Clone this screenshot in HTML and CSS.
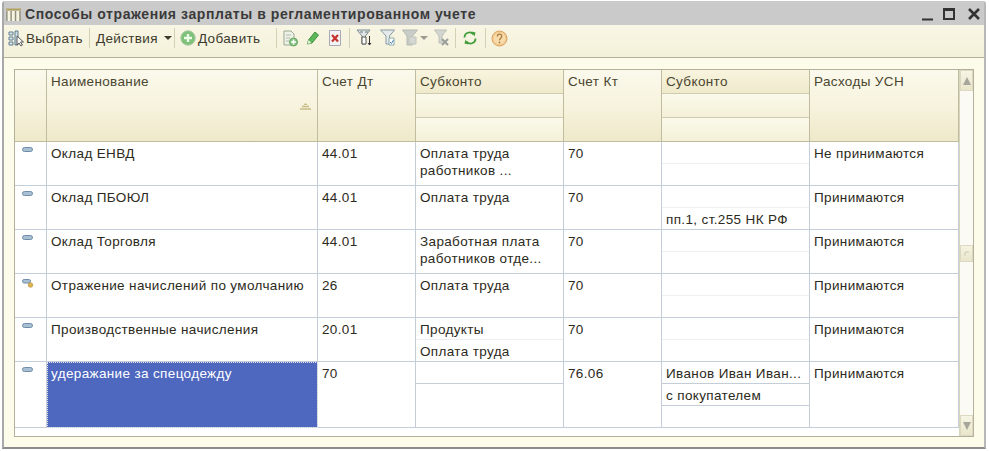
FILE: index.html
```html
<!DOCTYPE html>
<html lang="ru">
<head>
<meta charset="utf-8">
<title>Способы отражения зарплаты</title>
<link rel="stylesheet" href="styles.css">
</head>
<body>
<div class="window">
  <div class="title">
    <svg class="title-icon" width="15" height="13" viewBox="0 0 15 13"><path d="M0 1.500h15" stroke="#b3a25e" stroke-width="2"/><path d="M1 3v10M5 3v10M9.500 3v10M14 3v10" stroke="#8d8d78" stroke-width="1.400"/><path d="M3 3v10M7.300 3v10M11.800 3v10" stroke="#f7f4df" stroke-width="2.600"/></svg>
    <span class="title-text">Способы отражения зарплаты в регламентированном учете</span>
    <div class="win-buttons">
      <svg width="14" height="14" viewBox="0 0 14 14"><path d="M1 12.500h11" stroke="#333" stroke-width="2"/></svg>
      <svg class="wb-max" width="14" height="14" viewBox="0 0 14 14"><path d="M2 2.500h10v9.500H2z" fill="none" stroke="#333" stroke-width="2"/><path d="M1 2.500h12" stroke="#333" stroke-width="3"/></svg>
      <svg class="wb-close" width="14" height="14" viewBox="0 0 14 14"><path d="M2 2l10 10M12 2L2 12" stroke="#333" stroke-width="2.600"/></svg>
    </div>
  </div>
  <div class="toolbar">
    <span class="tb-btn"><svg width="16" height="18" viewBox="0 0 16 18"><path d="M1 3h4v3H1zM1 8h4v3H1zM1 13h4v3H1z" fill="#dfe8ee" stroke="#5f7f90"/><path d="M7 2h3v14H7z" fill="#cfdde6" stroke="#5f7f90"/><path d="M9 7l0 9 2-2 2 3 1.500-1-2-3h3z" fill="#fff" stroke="#555"/></svg>Выбрать</span>
    <i class="sep sep-a"></i>
    <span class="tb-btn">Действия<b class="caret"></b></span>
    <i class="sep sep-b"></i>
    <span class="tb-btn"><svg width="16" height="16" viewBox="0 0 16 16"><circle cx="8" cy="8" r="7.200" fill="#7fc07a" stroke="#a5c9a0"/><path d="M8 4v8M4 8h8" stroke="#eafbe6" stroke-width="2.400"/></svg><span><u>Д</u>обавить</span></span>
    <i class="sep sep-c"></i>
    <svg class="tb-icon ml-0" width="15" height="17" viewBox="0 0 15 17"><path d="M1 1h7l3 3v11H1z" fill="#eef1e8" stroke="#9aa88e"/><path d="M3 5h5M3 8h4M3 11h3" stroke="#b3bda6"/><circle cx="10.500" cy="12" r="4" fill="#84c27e" stroke="#6aa566"/><path d="M10.500 9.500v5M8 12h5" stroke="#fff" stroke-width="1.500"/></svg>
    <svg class="tb-icon ml-9" width="12" height="14" viewBox="0 0 12 14"><path d="M.5 13l1-4 6.500-8 3.500 3-6.500 8z" fill="#5cb85a" stroke="#3f8f3d"/><path d="M.5 13l1-4 3 3z" fill="#e8efd8"/></svg>
    <svg class="tb-icon ml-10" width="12" height="16" viewBox="0 0 12 16"><path d="M.5.500h11v15H.5z" fill="#f3f3f3" stroke="#a8a8b8"/><path d="M3 5l6 6.500M9 5l-6 6.500" stroke="#c8322e" stroke-width="2.200"/></svg>
    <i class="sep sep-d"></i>
    <svg class="tb-icon ml-0" width="16" height="18" viewBox="0 0 16 18"><path d="M1 1h13l-4.500 6v8H6V7z" fill="#dfe5e6" stroke="#7b8b8e"/><path d="M4 3h3M9 3h3" stroke="#6a7a7c"/><path d="M6 8h4v7H6z" fill="#fff" stroke="#555"/><path d="M13.500 7v9M12 14l1.500 2 1.500-2" stroke="#333" fill="none"/></svg>
    <svg class="tb-icon ml-8" width="15" height="18" viewBox="0 0 15 18"><path d="M.5 1h14l-5 6v8H6V7z" fill="#e4eaec" stroke="#8a9ba0"/><path d="M9 9h5v7H9z" fill="#fff" stroke="#8aa"/><path d="M10 13l1.500 1.500L13.500 11" stroke="#4a86c0" fill="none"/></svg>
    <svg class="tb-icon ml-7" width="16" height="18" viewBox="0 0 16 18"><path d="M.5 1h15l-5 6v9H5V7z" fill="#c9cdc8" stroke="#b5b9b3"/><path d="M7 8h7v7H7z" fill="#d5d8d2" stroke="#bfc3bc"/></svg>
    <b class="caret caret-grey"></b>
    <svg class="tb-icon ml-6" width="15" height="18" viewBox="0 0 15 18"><path d="M.5 1h12L8 7v7H5V7z" fill="#d2d5d0" stroke="#bcc0ba"/><path d="M8 10l6 6M14 10l-6 6" stroke="#9a9d98" stroke-width="2"/></svg>
    <i class="sep sep-e"></i>
    <svg class="tb-icon ml-1" width="14" height="14" viewBox="0 0 14 14"><path d="M1.500 6.500A5 5 0 0 1 10.500 3.500" fill="none" stroke="#3f9c3a" stroke-width="1.800"/><path d="M8.500 .5l4 1-1 4z" fill="#3f9c3a"/><path d="M12.500 7.500A5 5 0 0 1 3.500 10.500" fill="none" stroke="#3f9c3a" stroke-width="1.800"/><path d="M5.500 13.500l-4-1 1-4z" fill="#3f9c3a"/></svg>
    <i class="sep sep-d"></i>
    <svg class="tb-icon ml-m1" width="17" height="17" viewBox="0 0 17 17"><circle cx="8.500" cy="8.500" r="7.500" fill="#f3c98e" stroke="#d9a25f"/><circle cx="8.500" cy="8.500" r="5.800" fill="#f8dcae"/><path d="M6.300 6.500c0-3 4.500-3 4.500-.2 0 2-2.300 2-2.300 4" fill="none" stroke="#a97b3c" stroke-width="1.300"/><circle cx="8.500" cy="12.500" r=".9" fill="#a97b3c"/></svg>
  </div>
  <div class="content">
    <div class="table">
      <div class="grid">
        <div class="head"></div>
        <div class="head"><span class="cell-text">Наименование</span><svg class="sort" width="13" height="7" viewBox="0 0 13 7"><path d="M6.500 0l2 2h-4z" fill="#c8bd86"/><path d="M3 3.500h7M1 6h11" stroke="#c8bd86" stroke-width="1.300"/></svg></div>
        <div class="head"><span class="cell-text">Счет Дт</span></div>
        <div class="head head-sub"><div class="sub-h first"><span class="cell-text">Субконто</span></div><div class="sub-h"></div><div class="sub-h last"></div></div>
        <div class="head"><span class="cell-text">Счет Кт</span></div>
        <div class="head head-sub"><div class="sub-h first"><span class="cell-text">Субконто</span></div><div class="sub-h"></div><div class="sub-h last"></div></div>
        <div class="head"><span class="cell-text">Расходы УСН</span></div>

        <div class="c mark"><svg class="dash" width="11" height="6" viewBox="0 0 11 6"><rect x=".5" y=".5" width="10" height="4" rx="2" fill="#a9bfd4" stroke="#6f8ca8"/></svg></div>
        <div class="c">Оклад ЕНВД</div>
        <div class="c">44.01</div>
        <div class="c multi">Оплата труда<br>работников ...</div>
        <div class="c">70</div>
        <div class="c split"><div class="s"></div><div class="s"></div></div>
        <div class="c">Не принимаются</div>

        <div class="c mark"><svg class="dash" width="11" height="6" viewBox="0 0 11 6"><rect x=".5" y=".5" width="10" height="4" rx="2" fill="#a9bfd4" stroke="#6f8ca8"/></svg></div>
        <div class="c">Оклад ПБОЮЛ</div>
        <div class="c">44.01</div>
        <div class="c">Оплата труда</div>
        <div class="c">70</div>
        <div class="c split"><div class="s"></div><div class="s">пп.1, ст.255 НК РФ</div></div>
        <div class="c">Принимаются</div>

        <div class="c mark"><svg class="dash" width="11" height="6" viewBox="0 0 11 6"><rect x=".5" y=".5" width="10" height="4" rx="2" fill="#a9bfd4" stroke="#6f8ca8"/></svg></div>
        <div class="c">Оклад Торговля</div>
        <div class="c">44.01</div>
        <div class="c multi">Заработная плата<br>работников отде...</div>
        <div class="c">70</div>
        <div class="c split"><div class="s"></div><div class="s"></div></div>
        <div class="c">Принимаются</div>

        <div class="c mark"><svg class="dash" width="12" height="9" viewBox="0 0 12 9"><rect x=".5" y=".5" width="8" height="3.500" rx="1.700" fill="#a9bfd4" stroke="#6f8ca8"/><circle cx="8.500" cy="6" r="2.300" fill="#e0b550" stroke="#b08a30" stroke-width=".6"/></svg></div>
        <div class="c">Отражение начислений по умолчанию</div>
        <div class="c">26</div>
        <div class="c">Оплата труда</div>
        <div class="c">70</div>
        <div class="c split"><div class="s"></div><div class="s"></div></div>
        <div class="c">Принимаются</div>

        <div class="c mark"><svg class="dash" width="11" height="6" viewBox="0 0 11 6"><rect x=".5" y=".5" width="10" height="4" rx="2" fill="#a9bfd4" stroke="#6f8ca8"/></svg></div>
        <div class="c">Производственные начисления</div>
        <div class="c">20.01</div>
        <div class="c split"><div class="s">Продукты</div><div class="s">Оплата труда</div></div>
        <div class="c">70</div>
        <div class="c split"><div class="s"></div><div class="s"></div></div>
        <div class="c">Принимаются</div>

        <div class="c mark"><svg class="dash" width="11" height="6" viewBox="0 0 11 6"><rect x=".5" y=".5" width="10" height="4" rx="2" fill="#a9bfd4" stroke="#6f8ca8"/></svg></div>
        <div class="c selected">удеражание за спецодежду</div>
        <div class="c">70</div>
        <div class="c split strong"><div class="s"></div><div class="s"></div></div>
        <div class="c">76.06</div>
        <div class="c split strong"><div class="s">Иванов Иван Иван...</div><div class="s">с покупателем</div><div class="s"></div></div>
        <div class="c">Принимаются</div>
      </div>
      <div class="scrollbar">
        <div class="arrow"><b class="tri up"></b></div>
        <div class="track">
          <div class="thumb"><svg width="6" height="6" viewBox="0 0 6 6"><path d="M1 5V2q0-1 1-1h3" stroke="#c8c8b4" fill="none"/></svg></div>
        </div>
        <div class="arrow"><b class="tri down"></b></div>
      </div>
    </div>
  </div>
</div>
</body>
</html>
```
FILE: styles.css
```css
* { box-sizing: border-box; }
html, body { margin: 0; padding: 0; background: #fff; }
body { width: 989px; height: 451px; overflow: hidden; font-family: "Liberation Sans", Arial, sans-serif; }
.window {
  margin: 1px 0 0 2px;
  width: 984px;
  height: 448px;
  background: #fdfcea;
  border-top: 0;
  border-right: 2px solid #b8b8b8;
  border-bottom: 2px solid #8c8c8c;
  border-left: 2px solid #a8a8a8;
  border-radius: 3px 3px 0 0;
  display: flex;
  flex-direction: column;
}
.title {
  height: 24px;
  background: #cacaca;
  display: flex;
  align-items: center;
  padding: 2px 3px 0 2px;
  flex: none;
}
.title-icon { margin-right: 4px; flex: none; }
.title-text { font-weight: bold; font-size: 14px; letter-spacing: .57px; color: #3a3a3a; }
.win-buttons { margin-left: auto; display: flex; align-items: center; }
.wb-max { margin-left: 7px; }
.wb-close { margin-left: 11px; }
.toolbar {
  height: 33px;
  flex: none;
  background: linear-gradient(#f8f6e4, #f4f1da);
  border-bottom: 1px solid #b4b09a;
  display: flex;
  align-items: center;
  padding: 0 0 6px 4px;
  font-size: 13.5px;
  letter-spacing: .36px;
  color: #3c3a2c;
}
.tb-btn { display: inline-flex; align-items: center; gap: 2px; }
.sep { width: 1px; height: 20px; background: #d4d0b4; flex: none; }
.sep-a { margin: 0 6px; }
.sep-b { margin: 0 5px 0 2px; }
.sep-c { margin: 0 6px 0 16px; }
.sep-d { margin: 0 6px 0 8px; }
.sep-e { margin: 0 7px 0 6px; }
.tb-icon { flex: none; }
.ml-0 { margin-left: 0; }
.ml-1 { margin-left: 0; }
.ml-m1 { margin-left: -1px; }
.ml-6 { margin-left: 6px; }
.ml-7 { margin-left: 7px; }
.ml-8 { margin-left: 8px; }
.ml-9 { margin-left: 9px; }
.ml-10 { margin-left: 10px; }
.caret { display: inline-block; width: 0; height: 0; margin-left: 4px; border: 4px solid transparent; border-top-color: #3c3a2c; border-bottom: 0; flex: none; }
.caret-grey { border-top-color: #9a9a90; margin-left: 2px; }
.content { flex: 1; padding: 11px 10px 0 10px; background: #fdfcea; }
.table { display: flex; height: 368px; border: 1px solid #b4b09a; background: #fff; }
.grid {
  width: 944px;
  flex: none;
  display: grid;
  grid-template-columns: 32px 271px 98px 148px 98px 148px 149px;
  grid-template-rows: 72px repeat(5, 44px) 66px;
  align-content: start;
  font-size: 13.5px;
  letter-spacing: .36px;
}
.head {
  position: relative;
  background: linear-gradient(#fbf9ec, #f6f2dc 55%, #eee9c9);
  border-right: 1px solid #c0bca0;
  border-bottom: 1px solid #c0bca0;
  color: #4a4630;
  padding: 4px 4px;
}
.head-sub { padding: 0; display: flex; flex-direction: column; }
.sub-h { flex: 1; border-bottom: 1px solid #cfcbb0; padding: 4px 4px 0; background: linear-gradient(#fbf9ea, #f4f0d8); }
.sub-h.first { background: linear-gradient(#f8f4de, #efeacc); }
.sub-h.last { border-bottom: 0; }
.cell-text { display: block; line-height: 16px; }
.sort { position: absolute; right: 5px; top: 33px; }
.c {
  border-right: 1px solid #c3ced8;
  border-bottom: 1px solid #c3ced8;
  padding: 4px 4px 0;
  line-height: 16px;
  color: #2c2a20;
  white-space: nowrap;
  overflow: hidden;
}
.multi { line-height: 17px; padding-top: 3px; }
.mark { padding: 5px 0 0 7px; }
.dash { display: block; }
.split { padding: 0; display: flex; flex-direction: column; }
.s { height: 22px; padding: 4px 4px 0; border-bottom: 1px solid #edf0f2; line-height: 16px; flex: none; }
.s:last-child { border-bottom: 0; }
.strong .s { border-bottom-color: #c3ced8; }
.strong .s:last-child { border-bottom: 0; }
.selected {
  background: #4e67bf;
  color: #fff;
  outline: 1px dotted #e8e8e8;
  outline-offset: -1px;
}
.scrollbar { flex: 1; display: flex; flex-direction: column; background: #fbfaf4; border-left: 1px solid #d8d5bd; }
.arrow { height: 21px; flex: none; display: flex; align-items: center; justify-content: center; background: linear-gradient(#f7f5e4, #e9e6cc); border: 1px solid #dcd9c0; }
.tri { width: 0; height: 0; border-left: 4px solid transparent; border-right: 4px solid transparent; }
.tri.up { border-bottom: 8px solid #a6a69a; }
.tri.down { border-top: 8px solid #a6a69a; }
.track { flex: 1; padding-top: 154px; }
.thumb { height: 17px; background: linear-gradient(#f6f4e2, #e9e6cc); border: 1px solid #dcd9c0; display: flex; align-items: center; justify-content: center; }
```
